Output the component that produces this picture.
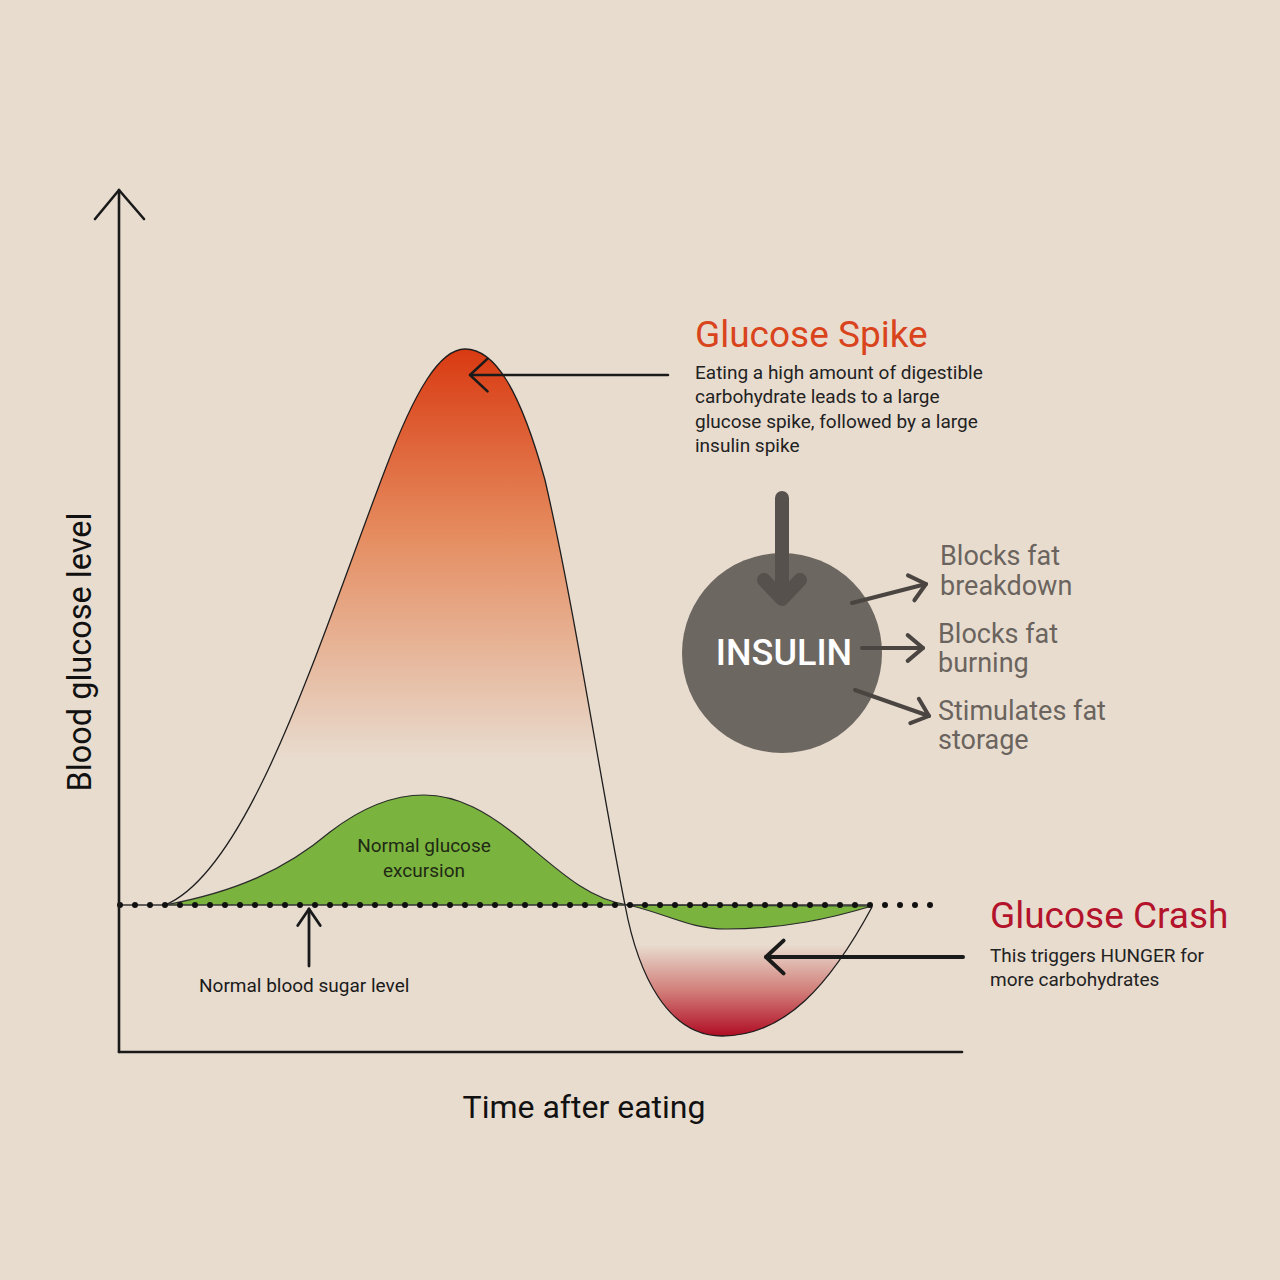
import React from 'react';

// arrowhead arms for a line ending at (x2, y2)
function head(x1, y1, x2, y2, len = 22, spread = 0.72) {
  const a = Math.atan2(y2 - y1, x2 - x1);
  const p1 = [x2 - len * Math.cos(a - spread), y2 - len * Math.sin(a - spread)];
  const p2 = [x2 - len * Math.cos(a + spread), y2 - len * Math.sin(a + spread)];
  return `${p1[0]},${p1[1]} ${x2},${y2} ${p2[0]},${p2[1]}`;
}

function Arrow({ x1, y1, x2, y2, width = 2.5, color = '#1a1a1a', len = 22, spread = 0.72 }) {
  return (
    <g stroke={color} strokeWidth={width} fill="none" strokeLinecap="round" strokeLinejoin="round">
      <line x1={x1} y1={y1} x2={x2} y2={y2} />
      <polyline points={head(x1, y1, x2, y2, len, spread)} />
    </g>
  );
}

const spikePath =
  'M165,905 C250,870 320,640 385,470 C415,390 440,349 465,349 C495,349 520,390 545,480 C575,610 600,780 625,905';
const crashPath = 'M625,905 C638,975 668,1036 722,1036 C785,1036 830,985 872,907';
const normalPath =
  'M165,905 C235,892 285,870 330,832 C365,805 395,795 424,795 C458,795 488,812 522,840 C560,872 590,900 628,905';
const sliverPath = 'M628,905 C668,914 690,929 726,929 C785,929 832,918 872,906 Z';

function App() {
  return (
    <div className="w-[1280px] h-[1280px] bg-[#e8dccf] font-['Roboto','Liberation_Sans',sans-serif]">
      <svg viewBox="0 0 1280 1280" className="w-[1280px] h-[1280px] block">
        <defs>
          <linearGradient id="spike" x1="0" y1="349" x2="0" y2="760" gradientUnits="userSpaceOnUse">
            <stop offset="0" stopColor="#d93a12" />
            <stop offset="0.45" stopColor="#e58c5f" />
            <stop offset="1" stopColor="#e8dccf" />
          </linearGradient>
          <linearGradient id="crash" x1="0" y1="945" x2="0" y2="1036" gradientUnits="userSpaceOnUse">
            <stop offset="0" stopColor="#e8dccf" />
            <stop offset="0.5" stopColor="#d27f7a" />
            <stop offset="1" stopColor="#b00d24" />
          </linearGradient>
        </defs>

        {/* fills */}
        <path d={spikePath + ' Z'} fill="url(#spike)" />
        <path d={crashPath + ' Z'} fill="url(#crash)" />
        <path d={normalPath + ' Z'} fill="#7bb33f" />
        <path d={sliverPath} fill="#7bb33f" />

        {/* outlines */}
        <path d={normalPath} fill="none" stroke="#2b2b2b" strokeWidth="1.2" />
        <path d={sliverPath} fill="none" stroke="#2b2b2b" strokeWidth="1.2" />
        <path d={spikePath} fill="none" stroke="#1e1e1e" strokeWidth="1.3" />
        <path d={crashPath} fill="none" stroke="#1e1e1e" strokeWidth="1.3" />

        {/* baseline */}
        <line x1="120" y1="905" x2="872" y2="905" stroke="#333" strokeWidth="1.6" />
        <line
          x1="120"
          y1="905"
          x2="935"
          y2="905"
          stroke="#111"
          strokeWidth="6"
          strokeLinecap="round"
          strokeDasharray="0 15"
        />

        {/* axes */}
        <g stroke="#1a1a1a" strokeWidth="2.6" fill="none" strokeLinecap="round" strokeLinejoin="round">
          <line x1="119" y1="190" x2="119" y2="1052" />
          <polyline points="95,219 119,190 144,219" />
          <line x1="119" y1="1052" x2="962" y2="1052" />
        </g>

        {/* annotation arrows */}
        <Arrow x1={668} y1={375} x2={470} y2={375} width={2.5} len={24} spread={0.75} />
        <Arrow x1={963} y1={957} x2={766} y2={957} width={4} len={24} spread={0.75} />
        <Arrow x1={309} y1={966} x2={309} y2={909} width={2.8} len={20} spread={0.6} />

        {/* insulin */}
        <circle cx="782" cy="653" r="100" fill="#6d6761" />
        <g stroke="#56514c" strokeWidth="14" fill="none" strokeLinecap="round" strokeLinejoin="round">
          <line x1="782" y1="498" x2="782" y2="592" />
          <polyline points="764,580 782,599 800,580" />
        </g>
        <text x="784" y="665" textAnchor="middle" fontSize="36" fontWeight="500" fill="#ffffff">
          INSULIN
        </text>
        <Arrow x1={852} y1={603} x2={926} y2={584} width={4} color="#4a4541" len={20} spread={0.7} />
        <Arrow x1={862} y1={648} x2={923} y2={648} width={4} color="#4a4541" len={20} spread={0.7} />
        <Arrow x1={855} y1={690} x2={929} y2={716} width={4} color="#4a4541" len={20} spread={0.7} />

        <g fontSize="27" fill="#6b645e">
          <text x="940" y="565">Blocks fat</text>
          <text x="940" y="595">breakdown</text>
          <text x="938" y="643">Blocks fat</text>
          <text x="938" y="672">burning</text>
          <text x="938" y="720">Stimulates fat</text>
          <text x="938" y="749">storage</text>
        </g>

        {/* spike label */}
        <text x="695" y="347" fontSize="37" fill="#d9441c">
          Glucose Spike
        </text>
        <g fontSize="19" fill="#222">
          <text x="695" y="379">Eating a high amount of digestible</text>
          <text x="695" y="403">carbohydrate leads to a large</text>
          <text x="695" y="428">glucose spike, followed by a large</text>
          <text x="695" y="452">insulin spike</text>
        </g>

        {/* crash label */}
        <text x="990" y="928" fontSize="37" fill="#b3132b">
          Glucose Crash
        </text>
        <g fontSize="19" fill="#222">
          <text x="990" y="962">This triggers HUNGER for</text>
          <text x="990" y="986">more carbohydrates</text>
        </g>

        {/* curve labels */}
        <g fontSize="19" fill="#1f2a14" textAnchor="middle">
          <text x="424" y="852">Normal glucose</text>
          <text x="424" y="877">excursion</text>
        </g>
        <text x="199" y="992" fontSize="19" fill="#1a1a1a">
          Normal blood sugar level
        </text>

        {/* axis labels */}
        <text x="584" y="1118" fontSize="32" textAnchor="middle" fill="#111">
          Time after eating
        </text>
        <text x="91" y="652" fontSize="32.5" textAnchor="middle" fill="#111" transform="rotate(-90 91 652)">
          Blood glucose level
        </text>
      </svg>
    </div>
  );
}

export default App;
